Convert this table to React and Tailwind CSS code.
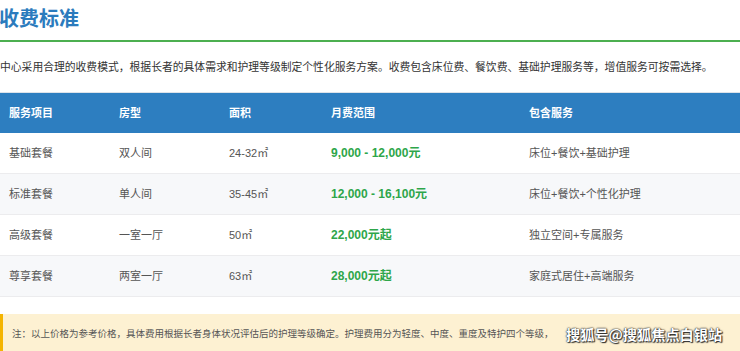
import React from 'react';

const font = "font-['Liberation_Sans','Noto_Sans_CJK_SC',sans-serif]";

const rows = [
    { name: '基础套餐', room: '双人间', area: '24-32㎡', price: '9,000 - 12,000元', service: '床位+餐饮+基础护理' },
    { name: '标准套餐', room: '单人间', area: '35-45㎡', price: '12,000 - 16,100元', service: '床位+餐饮+个性化护理' },
    { name: '高级套餐', room: '一室一厅', area: '50㎡', price: '22,000元起', service: '独立空间+专属服务' },
    { name: '尊享套餐', room: '两室一厅', area: '63㎡', price: '28,000元起', service: '家庭式居住+高端服务' },
];

const cols = 'grid grid-cols-[110px_110px_102px_198px_1fr]';

const App = () => {
    return (
        <div className={`relative w-[740px] h-[351px] overflow-hidden bg-white ${font}`}>
            {/* Title */}
            <div className="pt-[5px] pb-[7px] border-b-2 border-[#4caf50]">
                <h2 className="text-[20px] leading-[28px] font-bold text-[#2b7bbd] -ml-[1px]">收费标准</h2>
            </div>

            {/* Intro */}
            <p className="mt-[16px] text-[10.8px] leading-[18px] text-[#333]">
                中心采用合理的收费模式，根据长者的具体需求和护理等级制定个性化服务方案。收费包含床位费、餐饮费、基础护理服务等，增值服务可按需选择。
            </p>

            {/* Table */}
            <div className="mt-[16px] border-t border-[#dde3ea]">
                <div className={`${cols} h-[40px] items-center bg-[#2d7ec0] text-white text-[11px] font-bold`}>
                    <div className="pl-[9px]">服务项目</div>
                    <div className="pl-[9px]">房型</div>
                    <div className="pl-[9px]">面积</div>
                    <div className="pl-[9px]">月费范围</div>
                    <div className="pl-[9px]">包含服务</div>
                </div>
                {rows.map((r, i) => (
                    <div
                        key={r.name}
                        className={`${cols} h-[41px] items-center border-b border-[#ececee] text-[11px] text-[#555] ${i % 2 === 1 ? 'bg-[#f7f8fa]' : 'bg-white'}`}
                    >
                        <div className="pl-[9px]">{r.name}</div>
                        <div className="pl-[9px]">{r.room}</div>
                        <div className="pl-[9px]">{r.area}</div>
                        <div className="pl-[9px] text-[12px] font-bold text-[#2ea64a]">{r.price}</div>
                        <div className="pl-[9px]">{r.service}</div>
                    </div>
                ))}
            </div>

            {/* Note */}
            <div className="mt-[17px] h-[60px] bg-[#fdf1d2] border-l-[3px] border-[#f4b400] pl-[9px] pt-[12px]">
                <p className="text-[9.5px] leading-[16px] text-[#555] whitespace-nowrap">
                    注：以上价格为参考价格，具体费用根据长者身体状况评估后的护理等级确定。护理费用分为轻度、中度、重度及特护四个等级，
                </p>
            </div>

            {/* Watermark */}
            <div className="absolute left-[566px] top-[323px] text-[14.2px] leading-[22px] text-white font-bold font-['Noto_Sans_CJK_SC',sans-serif] [text-shadow:0_0_1px_#222,0_0_2px_#222,1px_1px_1px_#333]">
                搜狐号@搜狐焦点白银站
            </div>
        </div>
    );
};

export default App;
